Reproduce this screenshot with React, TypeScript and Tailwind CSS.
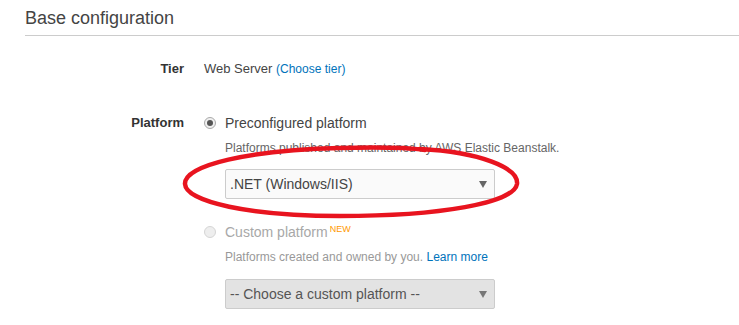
import React from "react";

function Caret({ color }: { color: string }) {
  return (
    <svg width="8" height="7" viewBox="0 0 8 7" className="shrink-0">
      <path d="M0 0 L8 0 L4 7 Z" fill={color} />
    </svg>
  );
}

export default function App() {
  return (
    <div
      className="relative w-[739px] h-[325px] overflow-hidden bg-white text-[#444]"
      style={{ fontFamily: '"Liberation Sans", Arial, sans-serif' }}
    >
      <div className="pl-[25px]">
        <h2 className="text-[18px] leading-[22px] pt-[7px] pb-[6px] text-[#444] border-b border-[#cccccc] font-normal">
          Base configuration
        </h2>

        <div className="grid grid-cols-[159px_1fr] gap-x-5 mt-[24px]">
          <div className="text-right font-bold text-[13px] leading-[18px] text-[#333]">Tier</div>
          <div className="text-[13px] leading-[18px] text-[#444]">
            Web Server <span className="text-[12px] text-[#0073bb]">(Choose tier)</span>
          </div>

          <div className="text-right font-bold text-[13px] leading-[18px] text-[#333] mt-[36px]">Platform</div>
          <div className="mt-[36px]">
            <div className="flex items-center">
              <span className="w-[12px] h-[12px] rounded-full border border-[#a9a9a9] bg-[#f0f0f0] flex items-center justify-center">
                <span className="w-[6px] h-[6px] rounded-full bg-[#555]" />
              </span>
              <span className="ml-[9px] text-[14px] leading-[18px] text-[#444]">Preconfigured platform</span>
            </div>
            <div className="ml-[21px] mt-[8px] text-[12px] leading-[16px] text-[#666]">
              Platforms published and maintained by AWS Elastic Beanstalk.
            </div>
            <div className="ml-[21px] mt-[13px] w-[270px] h-[30px] border border-[#cccccc] rounded-[2px] bg-[#fafafa] flex items-center justify-between pl-[4px] pr-[7px]">
              <span className="text-[14px] text-[#444]">.NET (Windows/IIS)</span>
              <Caret color="#666" />
            </div>

            <div className="flex items-center mt-[24px]">
              <span className="w-[12px] h-[12px] rounded-full border border-[#d5d5d5] bg-[#eeeeee]" />
              <span className="ml-[9px] text-[14px] leading-[18px] text-[#a8a8a8]">Custom platform</span>
              <span className="ml-[2px] -mt-[7px] text-[9px] leading-[10px] text-[#ff9900]">NEW</span>
            </div>
            <div className="ml-[21px] mt-[8px] text-[12px] leading-[16px] text-[#999]">
              Platforms created and owned by you. <span className="text-[#0073bb]">Learn more</span>
            </div>
            <div className="ml-[21px] mt-[14px] w-[270px] h-[30px] border border-[#cccccc] rounded-[2px] bg-[#e3e3e3] flex items-center justify-between pl-[4px] pr-[7px]">
              <span className="text-[14px] text-[#555]">-- Choose a custom platform --</span>
              <Caret color="#777" />
            </div>
          </div>
        </div>
      </div>

      <svg className="absolute left-0 top-0 pointer-events-none" width="739" height="325" viewBox="0 0 739 325">
        <path
          d="M 420 149 C 480 152, 519 168, 517 184 C 514 203, 440 216, 340 216 C 250 216, 186 202, 185 184 C 184 165, 250 150, 340 148 C 380 147, 410 148, 425 150"
          fill="none"
          stroke="#e8141f"
          strokeWidth="4.5"
          strokeLinecap="round"
        />
      </svg>
    </div>
  );
}
